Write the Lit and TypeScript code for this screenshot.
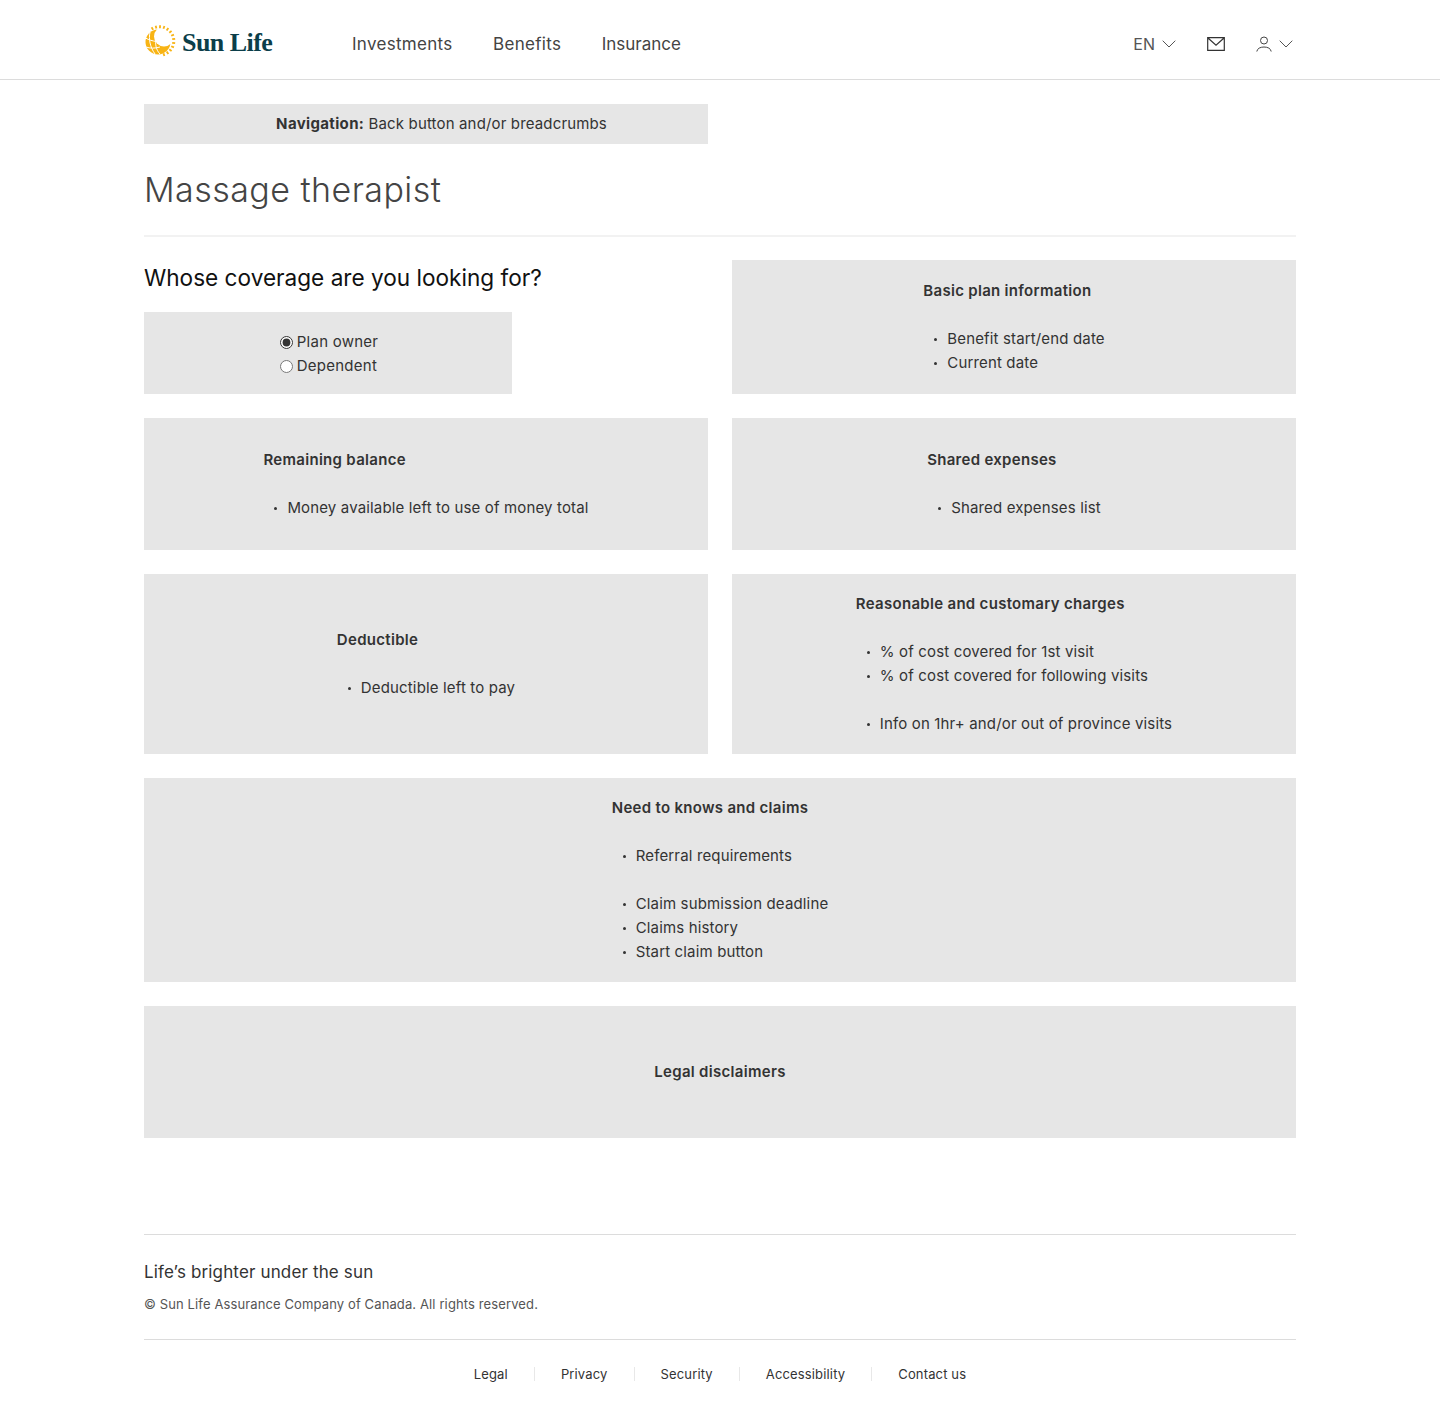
import { LitElement, html, svg, css } from "lit";
import { customElement } from "lit/decorators.js";

const rays = Array.from({ length: 13 }, (_, i) => {
  const a = ((-30 + i * 16) * Math.PI) / 180;
  const x = (r: number) => (15.5 + r * Math.sin(a)).toFixed(2);
  const y = (r: number) => (16 - r * Math.cos(a)).toFixed(2);
  return svg`<line x1=${x(12.8)} y1=${y(12.8)} x2=${x(15.8)} y2=${y(15.8)} />`;
});

const sun = html`<svg class="sun" viewBox="0 0 32 32" width="32" height="32" aria-hidden="true">
  <circle cx="14" cy="17" r="12.500" fill="#f8b414"/>
  <circle cx="20" cy="11.500" r="10" fill="#fff"/>
  <g stroke="#fff" stroke-width="1" fill="none">
    <path d="M1.500 13c3.500 2 7 3 11 3.500M2 22c4 1.500 9 1.500 14 0M6 7c-1.500 7 0 15 5 22M12 14c-1 5 0 11 4 15"/>
  </g>
  <g stroke="#f8b414" stroke-width="1.800" fill="none">${rays}</g>
</svg>`;

const chev = html`<svg class="chev" viewBox="0 0 14 8" width="14" height="8" aria-hidden="true"><path d="M.7 .7l6.300 6.300 6.300-6.300" fill="none" stroke="#555" stroke-width="1"/></svg>`;

@customElement("app-root")
export class AppRoot extends LitElement {
  static styles = css`
    :host { display: block; min-height: 1425px; background: #fff; color: #333; font-family: "Inter", "Liberation Sans", sans-serif; font-size: 15px; line-height: 24px; letter-spacing: .15px; }
    * { box-sizing: border-box; }
    .wrap { width: 1152px; margin: 0 auto; }
    header { height: 80px; border-bottom: 1px solid #dcdcdc; }
    .head { display: flex; align-items: center; height: 79px; padding-top: 8px; }
    .logo { display: flex; align-items: center; gap: 6px; width: 208px; margin-top: -6px; }
    .word { font-family: "Liberation Serif", serif; font-weight: 700; font-size: 26px; color: #0b3e4a; letter-spacing: -.55px; margin-top: 5px; }
    nav { display: flex; gap: 40.5px; font-size: 17px; letter-spacing: .3px; color: #444; flex: 1; }
    .ins { letter-spacing: 0; }
    .tools { display: flex; align-items: center; color: #555; margin-right: 3px; }
    .lang { display: flex; align-items: center; gap: 7px; margin-right: 31px; font-size: 16px; letter-spacing: 0; }
    .mail { margin-right: 31px; display: block; }
    .user { display: flex; align-items: center; gap: 7px; }
    .bar { width: 564px; height: 40px; margin-top: 24px; padding-left: 31px; background: #e6e6e6; display: flex; align-items: center; justify-content: center; padding-bottom: 1px; }
    .bar b { letter-spacing: .35px; }
    h1 { font-size: 34px; line-height: 44px; font-weight: 300; letter-spacing: .45px; color: #444; margin: 24px 0 0; border-bottom: 2px solid #f2f2f2; height: 69px; }
    .grid { display: grid; grid-template-columns: 1fr 1fr; gap: 24px; margin-top: 23px; }
    .full { grid-column: 1 / -1; }
    h2 { margin: 0 0 16px; font-size: 22.6px; line-height: 36px; font-weight: 400; letter-spacing: 0; color: #111; }
    .card { background: #e6e6e6; display: flex; align-items: center; justify-content: center; padding: 18px; min-height: 132px; }
    .card.radio { width: 368px; min-height: 82px; padding: 18px 16px 16px 18px; letter-spacing: .25px; }
    label { display: flex; align-items: center; gap: 4px; }
    input { margin: 0; width: 13px; height: 13px; accent-color: #333; }
    h3 { margin: 0 0 24px; font-size: 15px; line-height: 24px; font-weight: 600; letter-spacing: .3px; }
    ul { margin: 0; padding: 0 0 0 24px; list-style: none; }
    li { position: relative; min-height: 24px; }
    li::before { content: ""; position: absolute; left: -13px; top: 11px; width: 3px; height: 3px; border-radius: 50%; background: #333; }
    li.gap { margin-top: 24px; }
    .foot { margin-top: 96px; border-top: 1px solid #dcdcdc; }
    .tag { font-size: 17px; line-height: 28px; margin-top: 23px; }
    .copy { font-size: 13px; line-height: 20px; color: #555; margin-top: 8px; padding-bottom: 25px; border-bottom: 1px solid #dcdcdc; letter-spacing: .12px; }
    .links { display: flex; justify-content: center; align-items: center; font-size: 13px; line-height: 20px; margin-top: 24px; }
    .links a { color: #333; }
    .links i { width: 1px; height: 14px; background: #e8e8e8; margin: 0 26px; }
  `;
  render() {
    return html`
      <header><div class="wrap head">
        <div class="logo">${sun}<span class="word">Sun Life</span></div>
        <nav><span>Investments</span><span>Benefits</span><span class="ins">Insurance</span></nav>
        <div class="tools">
          <span class="lang">EN ${chev}</span>
          <svg class="mail" viewBox="0 0 18 14" width="18" height="14" aria-hidden="true"><path d="M.7 .7h16.600v12.600H.7zM.7 .7l8.300 7.500 8.300-7.500" fill="none" stroke="#333" stroke-width="1.200"/></svg>
          <span class="user"><svg viewBox="0 0 16 16" width="16" height="16" aria-hidden="true"><circle cx="8" cy="4.500" r="3.500" fill="none" stroke="#444"/><path d="M.8 15.500c.5-3 3.300-4.500 7.200-4.500s6.700 1.500 7.200 4.500" fill="none" stroke="#444"/></svg>${chev}</span>
        </div>
      </div></header>
      <main class="wrap">
        <div class="bar"><span><b>Navigation:</b> Back button and/or breadcrumbs</span></div>
        <h1>Massage therapist</h1>
        <div class="grid">
          <div>
            <h2>Whose coverage are you looking for?</h2>
            <div class="card radio"><div>
              <label><input type="radio" name="who" checked />Plan owner</label>
              <label><input type="radio" name="who" />Dependent</label>
            </div></div>
          </div>
          <div class="card"><div><h3>Basic plan information</h3><ul><li>Benefit start/end date</li><li>Current date</li></ul></div></div>
          <div class="card"><div><h3>Remaining balance</h3><ul><li>Money available left to use of money total</li></ul></div></div>
          <div class="card"><div><h3>Shared expenses</h3><ul><li>Shared expenses list</li></ul></div></div>
          <div class="card"><div><h3>Deductible</h3><ul><li>Deductible left to pay</li></ul></div></div>
          <div class="card"><div><h3>Reasonable and customary charges</h3><ul><li>% of cost covered for 1st visit</li><li>% of cost covered for following visits</li><li class="gap">Info on 1hr+ and/or out of province visits</li></ul></div></div>
          <div class="card full"><div><h3>Need to knows and claims</h3><ul><li>Referral requirements</li><li class="gap">Claim submission deadline</li><li>Claims history</li><li>Start claim button</li></ul></div></div>
          <div class="card full"><h3 style="margin:0">Legal disclaimers</h3></div>
        </div>
        <div class="foot">
          <div class="tag">Life’s brighter under the sun</div>
          <div class="copy">© Sun Life Assurance Company of Canada. All rights reserved.</div>
          <div class="links"><a>Legal</a><i></i><a>Privacy</a><i></i><a>Security</a><i></i><a>Accessibility</a><i></i><a>Contact us</a></div>
        </div>
      </main>`;
  }
}
